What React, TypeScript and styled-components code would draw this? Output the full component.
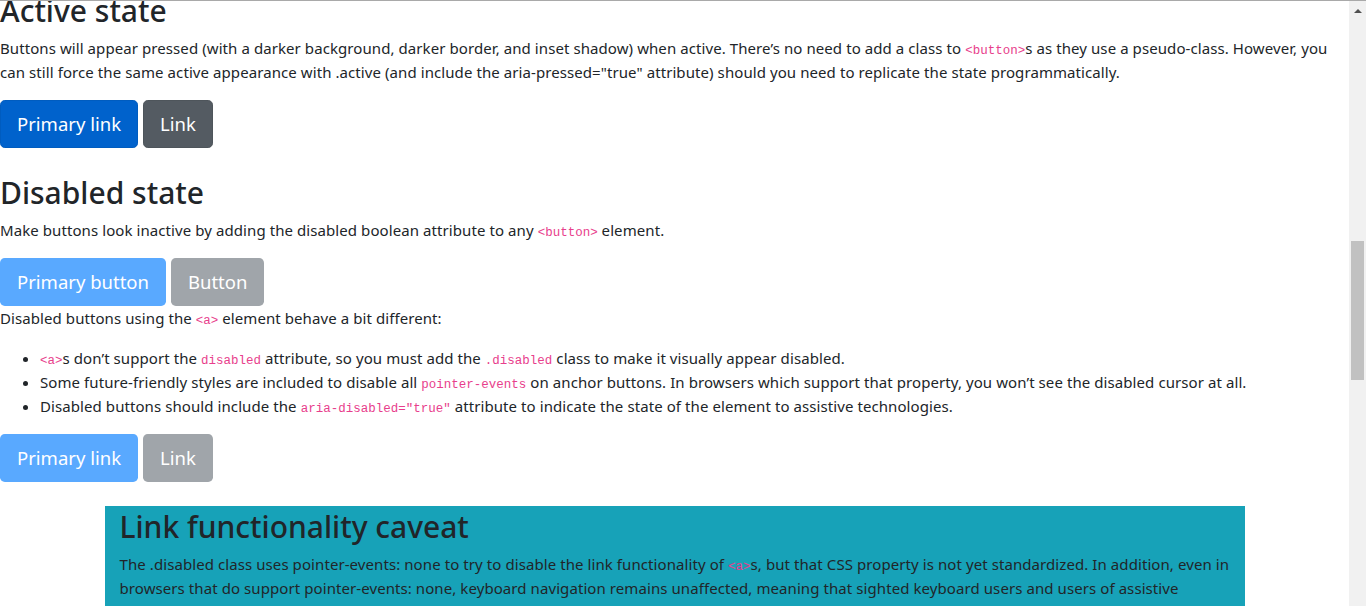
import React from "react";
import styled, { createGlobalStyle } from "styled-components";

const GlobalStyle = createGlobalStyle`
  html, body {
    margin: 0;
    padding: 0;
    overflow: hidden;
    background: #fff;
  }

  body {
    font-family: "Segoe UI", "Noto Sans", sans-serif;
    font-size: 15px;
    line-height: 24px;
    letter-spacing: 0.08px;
    color: #212529;
  }

  * {
    box-sizing: border-box;
  }
`;

const Frame = styled.div`
  height: 606px;
  display: flex;
  flex-direction: column;
  border-top: 1px solid #a9a9a9;
`;

const Viewport = styled.div`
  flex: 1;
  display: flex;
  min-height: 0;
`;

const Content = styled.main`
  flex: 1;
  overflow: hidden;
  min-width: 0;
`;

const Scrolled = styled.div`
  margin-top: -11px;
`;

const Heading = styled.h2<{ $spaced?: boolean }>`
  margin: ${(p) => (p.$spaced ? "24px" : "0")} 0 6px;
  padding-top: 2px;
  font-size: 30px;
  font-weight: 500;
  line-height: 38px;
  letter-spacing: 0;
`;

const Text = styled.p`
  margin: 0 0 16px;
`;

const Code = styled.code`
  font-family: "Liberation Mono", "DejaVu Sans Mono", monospace;
  font-size: 12.5px;
  line-height: 1;
  letter-spacing: 0;
  color: #e83e8c;
  word-wrap: break-word;
`;

const ButtonRow = styled.div<{ $flush?: boolean }>`
  display: flex;
  gap: 5px;
  margin-bottom: ${(p) => (p.$flush ? "0" : "16px")};
`;

const Button = styled.a<{ $variant: "primary" | "secondary"; $state: "active" | "disabled" }>`
  display: inline-block;
  padding: 8px 16px;
  font-size: 18.5px;
  line-height: 30px;
  letter-spacing: 0;
  border-radius: 4.8px;
  border: 1px solid transparent;
  color: #fff;
  text-decoration: none;
  background: ${(p) =>
    p.$state === "active"
      ? p.$variant === "primary"
        ? "#0062cc"
        : "#545b62"
      : p.$variant === "primary"
      ? "#59a9ff"
      : "#a0a5aa"};
  border-color: ${(p) =>
    p.$state === "active"
      ? p.$variant === "primary"
        ? "#005cbf"
        : "#4e555b"
      : "transparent"};
`;

const List = styled.ul`
  margin: 0 0 16px;
  padding-left: 40px;
`;

const Container = styled.div`
  max-width: 1140px;
  margin: 24px auto 0;
`;

const Callout = styled.div`
  background: #17a2b8;
  padding: 0 15px 16px;
`;

const Scrollbar = styled.div`
  width: 17px;
  background: #f1f1f1;
  display: flex;
  flex-direction: column;
  align-items: center;
`;

const ArrowUp = styled.div`
  width: 0;
  height: 0;
  margin-top: 8px;
  border-left: 4px solid transparent;
  border-right: 4px solid transparent;
  border-bottom: 4px solid #505050;
`;

const Thumb = styled.div<{ $top: number; $size: number }>`
  width: 13px;
  margin-top: ${(p) => p.$top}px;
  height: ${(p) => p.$size}px;
  background: #c1c1c1;
`;

const App: React.FC = () => {
  return (
    <>
      <GlobalStyle />
      <Frame>
        <Viewport>
          <Content>
            <Scrolled>
              <Heading>Active state</Heading>
              <Text>
                Buttons will appear pressed (with a darker background, darker border, and inset shadow)
                when active. There’s no need to add a class to <Code>&lt;button&gt;</Code>s as they use a
                pseudo-class. However, you can still force the same active appearance with .active (and
                include the aria-pressed="true" attribute) should you need to replicate the state
                programmatically.
              </Text>
              <ButtonRow>
                <Button $variant="primary" $state="active">Primary link</Button>
                <Button $variant="secondary" $state="active">Link</Button>
              </ButtonRow>

              <Heading $spaced>Disabled state</Heading>
              <Text>
                Make buttons look inactive by adding the disabled boolean attribute to any{" "}
                <Code>&lt;button&gt;</Code> element.
              </Text>
              <ButtonRow $flush>
                <Button $variant="primary" $state="disabled">Primary button</Button>
                <Button $variant="secondary" $state="disabled">Button</Button>
              </ButtonRow>
              <Text>
                Disabled buttons using the <Code>&lt;a&gt;</Code> element behave a bit different:
              </Text>
              <List>
                <li>
                  <Code>&lt;a&gt;</Code>s don’t support the <Code>disabled</Code> attribute, so you must
                  add the <Code>.disabled</Code> class to make it visually appear disabled.
                </li>
                <li>
                  Some future-friendly styles are included to disable all <Code>pointer-events</Code> on
                  anchor buttons. In browsers which support that property, you won’t see the disabled
                  cursor at all.
                </li>
                <li>
                  Disabled buttons should include the <Code>aria-disabled="true"</Code> attribute to
                  indicate the state of the element to assistive technologies.
                </li>
              </List>
              <ButtonRow $flush>
                <Button $variant="primary" $state="disabled">Primary link</Button>
                <Button $variant="secondary" $state="disabled">Link</Button>
              </ButtonRow>

              <Container>
                <Callout>
                  <Heading>Link functionality caveat</Heading>
                  <Text>
                    The .disabled class uses pointer-events: none to try to disable the link functionality
                    of <Code>&lt;a&gt;</Code>s, but that CSS property is not yet standardized. In addition,
                    even in browsers that do support pointer-events: none, keyboard navigation remains
                    unaffected, meaning that sighted keyboard users and users of assistive technologies
                    will still be able to activate these links. So to be safe, add a tabindex="-1"
                    attribute on these links (to prevent them from receiving keyboard focus) and use
                    custom JavaScript to disable their functionality.
                  </Text>
                </Callout>
              </Container>
            </Scrolled>
          </Content>
          <Scrollbar>
            <ArrowUp />
            <Thumb $top={228} $size={139} />
          </Scrollbar>
        </Viewport>
      </Frame>
    </>
  );
};

export default App;
